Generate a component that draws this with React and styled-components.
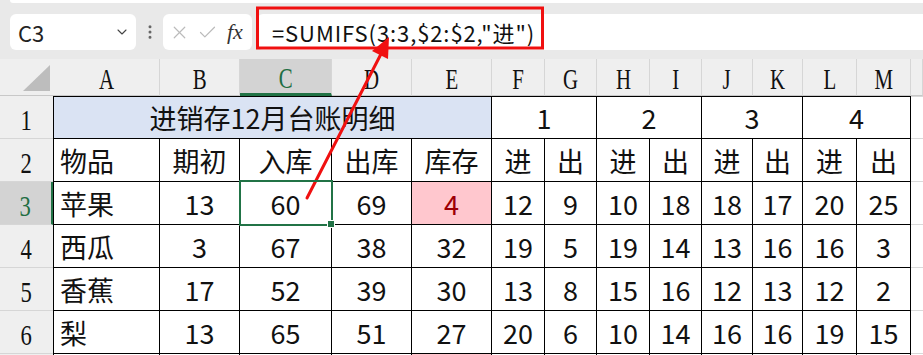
import React from "react";
import styled, { createGlobalStyle } from "styled-components";
import { X, Check, ChevronDown, EllipsisVertical } from "lucide-react";

const GlobalStyle = createGlobalStyle`
  html, body { margin: 0; padding: 0; background: #e9e9e9; }
  body { font-family: "Noto Sans CJK SC", "Noto Sans", sans-serif; }
  * { box-sizing: border-box; }
`;

const COLS = [53, 107, 80, 92, 80, 80, 53, 52, 53, 52, 51, 50, 54, 54, 12];
const LETTERS = ["", "A", "B", "C", "D", "E", "F", "G", "H", "I", "J", "K", "L", "M", ""];

const rows = [
  ["物品", "期初", "入库", "出库", "库存", "进", "出", "进", "出", "进", "出", "进", "出"],
  ["苹果", "13", "60", "69", "4", "12", "9", "10", "18", "18", "17", "20", "25"],
  ["西瓜", "3", "67", "38", "32", "19", "5", "19", "14", "13", "16", "16", "3"],
  ["香蕉", "17", "52", "39", "30", "13", "8", "15", "16", "12", "13", "12", "2"],
  ["梨", "13", "65", "51", "27", "20", "6", "10", "14", "16", "16", "19", "15"],
];

const Page = styled.div`
  position: relative;
  width: 923px;
  height: 355px;
  overflow: hidden;
  background: #e9e9e9;
`;

const TopStrip = styled.div`
  height: 3px;
  margin-left: 10px;
  background: #fff;
  border-radius: 0 0 0 6px;
`;

const FormulaBar = styled.div`
  display: flex;
  align-items: stretch;
  height: 36px;
  margin: 11px 0 9px 10px;
`;

const NameBox = styled.div`
  width: 126px;
  background: #fff;
  border-radius: 6px;
  display: flex;
  align-items: center;
  justify-content: space-between;
  padding: 0 6px 0 8px;
  font-size: 22px;
  color: #222;
`;

const Dots = styled.div`
  width: 27px;
  display: flex;
  align-items: center;
  justify-content: center;
  color: #666;
`;

const FxBox = styled.div`
  width: 89px;
  background: #fff;
  border-radius: 6px;
  display: flex;
  align-items: center;
  gap: 7px;
  padding-left: 6px;
  color: #bbb;
`;

const Fx = styled.i`
  font-family: "Liberation Serif", serif;
  font-size: 22px;
  color: #333;
  margin-left: 2px;
`;

const FormulaBox = styled.div`
  flex: 1;
  margin-left: 5px;
  background: #fff;
  border-radius: 6px 0 0 6px;
  display: flex;
  align-items: center;
  padding-left: 15px;
  font-size: 22px;
  letter-spacing: 0.9px;
  color: #111;
  white-space: nowrap;
`;

const Sheet = styled.div`
  display: grid;
  grid-template-columns: ${COLS.map((c) => c + "px").join(" ")};
  grid-template-rows: 37px repeat(7, 43px);
  background: #fff;
`;

const HeadCell = styled.div`
  display: flex;
  align-items: center;
  justify-content: center;
  padding-top: 5px;
  background: ${(p) => (p.$active ? "#d3d3d3" : "#efefef")};
  color: ${(p) => (p.$active ? "#1f6e43" : "#111")};
  border-right: 1px solid #d6d6d6;
  border-bottom: ${(p) => (p.$active ? "3px solid #217346" : "1px solid #c8c8c8")};
  font-family: "Liberation Serif", serif;
  font-size: 29px;
  span { display: inline-block; transform: scaleX(0.72); }
`;

const Corner = styled.div`
  position: relative;
  background: #efefef;
  border-bottom: 1px solid #c8c8c8;
  &::after {
    content: "";
    position: absolute;
    right: 3px;
    bottom: 4px;
    width: 27px;
    height: 26px;
    background: #bdbdbd;
    clip-path: polygon(100% 0, 100% 100%, 0 100%);
  }
`;

const RowHead = styled.div`
  display: flex;
  align-items: center;
  justify-content: center;
  padding-top: 6px;
  background: ${(p) => (p.$active ? "#d3d3d3" : "#efefef")};
  color: ${(p) => (p.$active ? "#1f6e43" : "#111")};
  border-bottom: 1px solid #d6d6d6;
  border-right: ${(p) => (p.$active ? "2px solid #217346" : "none")};
  font-family: "Liberation Serif", serif;
  font-size: 29px;
  span { display: inline-block; transform: scaleX(0.78); }
`;

const Cell = styled.div`
  position: relative;
  display: flex;
  align-items: center;
  justify-content: ${(p) => (p.$left ? "flex-start" : "center")};
  padding-left: ${(p) => (p.$left ? "6px" : "0")};
  grid-column: span ${(p) => p.$span || 1};
  background: ${(p) => p.$bg || "#fff"};
  color: ${(p) => p.$color || "#111"};
  border-right: 1px solid #000;
  border-bottom: 1px solid #000;
  border-top: ${(p) => (p.$top ? "1px solid #000" : "none")};
  border-left: ${(p) => (p.$first ? "1px solid #000" : "none")};
  font-size: 27px;
  white-space: nowrap;
`;

const Selected = styled.div`
  position: absolute;
  left: -1px;
  right: -2px;
  top: -2px;
  bottom: -2px;
  border: 2px solid #217346;
  z-index: 2;
  &::after {
    content: "";
    position: absolute;
    right: -4px;
    bottom: -4px;
    width: 6px;
    height: 6px;
    background: #217346;
    border: 1px solid #fff;
  }
`;

const Spare = styled.div`
  border-bottom: 1px solid #d9d9d9;
  border-top: ${(p) => (p.$top ? "1px solid #d9d9d9" : "none")};
  background: #fff;
`;

const Overlay = styled.svg`
  position: absolute;
  left: 0;
  top: 0;
  pointer-events: none;
`;

function Annotation() {
  return (
    <Overlay width="923" height="355" viewBox="0 0 923 355">
      <rect x="257.5" y="8" width="285" height="40" fill="none" stroke="#f01010" strokeWidth="3" />
      <line x1="307" y1="198" x2="382" y2="52" stroke="#f01010" strokeWidth="3" strokeLinecap="round" />
      <polygon points="389,37 388,59 372,51" fill="#f01010" />
    </Overlay>
  );
}

export default function App() {
  return (
    <Page>
      <GlobalStyle />
      <TopStrip />
      <FormulaBar>
        <NameBox>
          C3
          <ChevronDown size={16} color="#444" strokeWidth={1.6} />
        </NameBox>
        <Dots>
          <EllipsisVertical size={18} strokeWidth={2} />
        </Dots>
        <FxBox>
          <X size={21} strokeWidth={1.4} />
          <Check size={21} strokeWidth={1.4} />
          <Fx>fx</Fx>
        </FxBox>
        <FormulaBox>=SUMIFS(3:3,$2:$2,"进")</FormulaBox>
      </FormulaBar>

      <Sheet>
        <Corner />
        {LETTERS.slice(1).map((l, i) => (
          <HeadCell key={"h" + i} $active={l === "C"}>
            <span>{l}</span>
          </HeadCell>
        ))}

        <RowHead>
          <span>1</span>
        </RowHead>
        <Cell $span={5} $top $first $bg="#dae3f3">进销存12月台账明细</Cell>
        {["1", "2", "3", "4"].map((m) => (
          <Cell key={"m" + m} $span={2} $top>
            {m}
          </Cell>
        ))}
        <Spare $top />

        {rows.map((r, ri) => (
          <React.Fragment key={"r" + ri}>
            <RowHead $active={ri === 1}>
              <span>{ri + 2}</span>
            </RowHead>
            {r.map((v, ci) => {
              const alert = ri === 1 && ci === 4;
              return (
                <Cell
                  key={ci}
                  $first={ci === 0}
                  $left={ci === 0}
                  $bg={alert ? "#ffc7ce" : undefined}
                  $color={alert ? "#9c0006" : undefined}
                >
                  {v}
                  {ri === 1 && ci === 2 && <Selected />}
                </Cell>
              );
            })}
            <Spare />
          </React.Fragment>
        ))}

        <RowHead />
        {Array.from({ length: 13 }).map((_, ci) => (
          <Cell key={"e" + ci} $first={ci === 0} $bg={ci === 4 ? "#ffc7ce" : undefined} />
        ))}
        <Spare />
      </Sheet>
      <Annotation />
    </Page>
  );
}
